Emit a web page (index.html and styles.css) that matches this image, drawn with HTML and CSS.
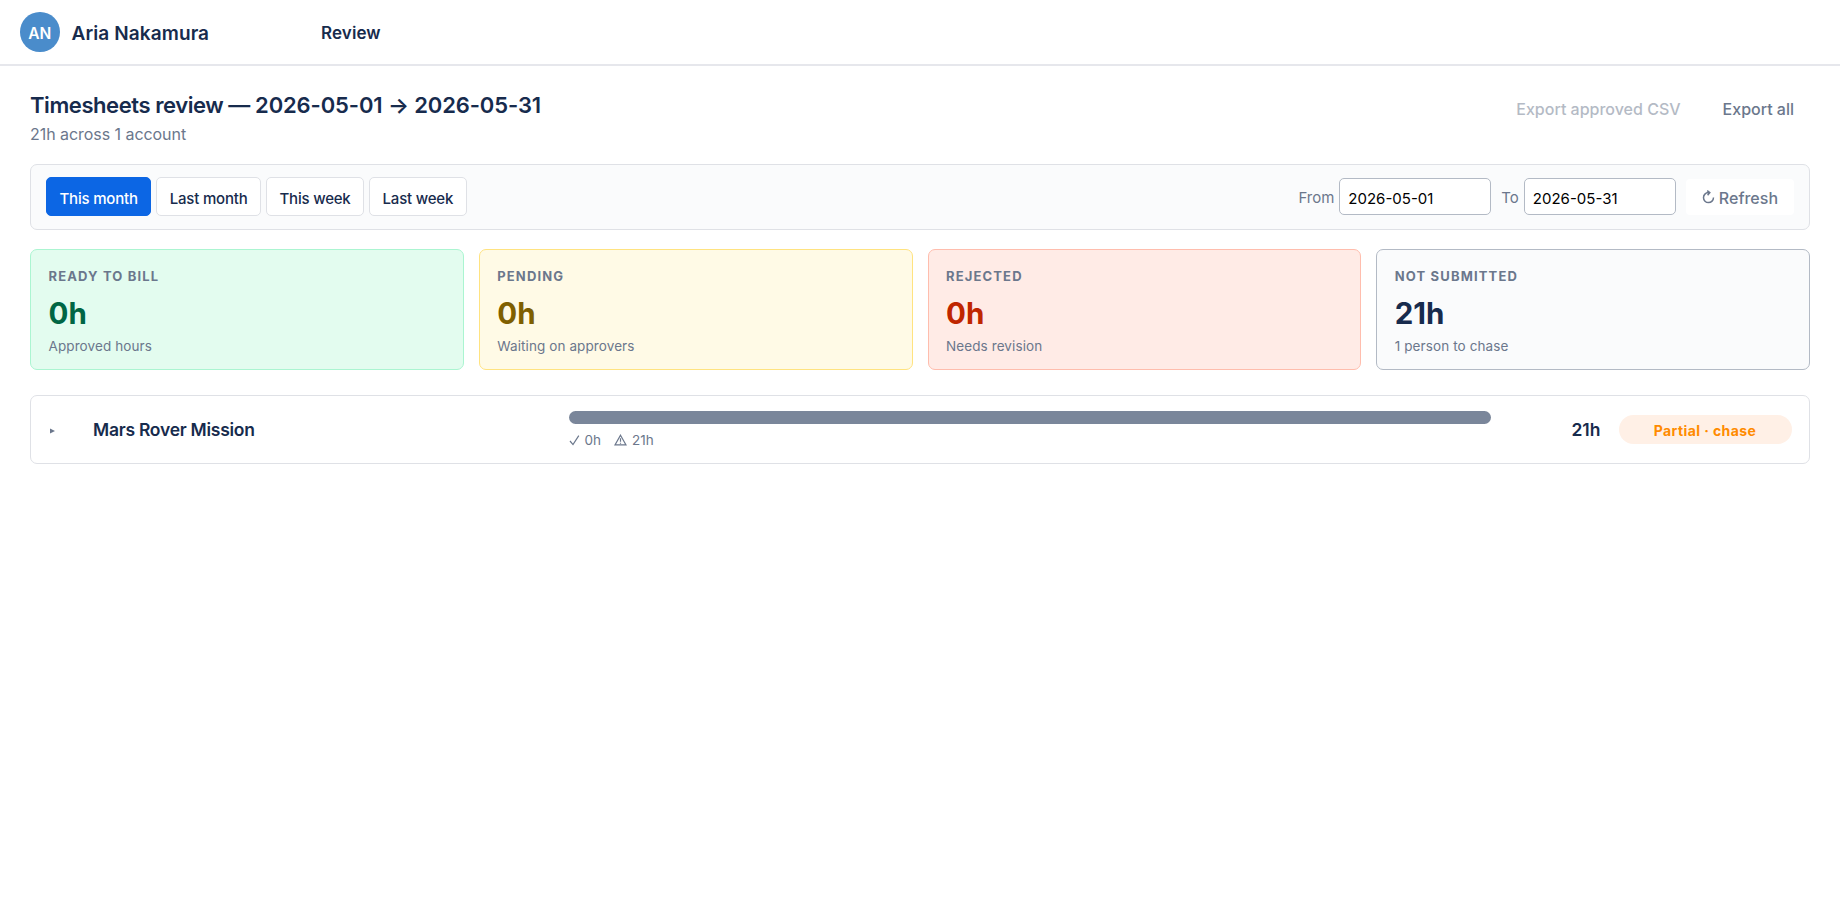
FILE: index.html
```
<!DOCTYPE html>
<html lang="en">
<head>
    <meta charset="UTF-8">
    <meta name="viewport" content="width=device-width, initial-scale=1.0">
    <title>Timesheets review</title>
    <link rel="stylesheet" href="styles.css">
</head>
<body>
    <header class="topbar">
        <div class="avatar">AN</div>
        <div class="user-name">Aria Nakamura</div>
        <nav class="nav">
            <a class="nav-link">Review</a>
        </nav>
    </header>

    <main class="page">
        <div class="page-head">
            <div>
                <h1>Timesheets review — <span class="dates">2026-05-01 → 2026-05-31</span></h1>
                <p class="subtitle">21h across 1 account</p>
            </div>
            <div class="actions">
                <button class="btn" disabled>Export approved CSV</button>
                <button class="btn">Export all</button>
            </div>
        </div>

        <div class="filters">
            <div class="presets">
                <button class="preset active">This month</button>
                <button class="preset">Last month</button>
                <button class="preset">This week</button>
                <button class="preset">Last week</button>
            </div>
            <div class="range">
                <label class="field"><span>From</span> <input type="text" value="2026-05-01"></label>
                <label class="field"><span>To</span> <input type="text" value="2026-05-31"></label>
                <button class="btn refresh">
                    <svg width="13" height="15" viewBox="0 0 13 15"><path d="M7 2.6H6.4a5 5 0 1 0 5.1 5M5.2.6l2.6 2-2.2 2.6"/></svg>
                    <span>Refresh</span>
                </button>
            </div>
        </div>

        <div class="cards">
            <div class="card ready">
                <div class="card-label">Ready to bill</div>
                <div class="card-value">0h</div>
                <div class="card-note">Approved hours</div>
            </div>
            <div class="card pending">
                <div class="card-label">Pending</div>
                <div class="card-value">0h</div>
                <div class="card-note">Waiting on approvers</div>
            </div>
            <div class="card rejected">
                <div class="card-label">Rejected</div>
                <div class="card-value">0h</div>
                <div class="card-note">Needs revision</div>
            </div>
            <div class="card missing">
                <div class="card-label">Not submitted</div>
                <div class="card-value">21h</div>
                <div class="card-note">1 person to chase</div>
            </div>
        </div>

        <div class="account">
            <svg class="caret" width="5" height="6" viewBox="0 0 5 6"><path d="M0 .5L5 3 0 5.5z"/></svg>
            <div class="account-name">Mars Rover Mission</div>
            <div class="progress">
                <div class="bar"><div class="bar-fill" style="width: 100%"></div></div>
                <div class="legend">
                    <span class="legend-item">
                        <svg width="11" height="12" viewBox="0 0 11 12"><path d="M1 7l3 3.6L9.8 1.6"/></svg>0h
                    </span>
                    <span class="legend-item">
                        <svg class="warn" width="13" height="12" viewBox="0 0 13 12"><path d="M6.5 1.2L12 10.9H1zM6.5 4.2v3.6M6.5 8.7v1"/></svg>21h
                    </span>
                </div>
            </div>
            <div class="account-total">21h</div>
            <div class="status">Partial · chase</div>
        </div>
    </main>
</body>
</html>
```
FILE: styles.css
```
* {
    box-sizing: border-box;
}

body {
    margin: 0;
    background: #fff;
    color: #172b4d;
    font-family: Inter, "Liberation Sans", sans-serif;
    font-size: 15px;
}

button, input {
    font: inherit;
}

.topbar {
    display: flex;
    align-items: center;
    height: 66px;
    padding: 0 20px;
    border-bottom: 2px solid #e6e7ec;
}

.avatar {
    width: 39.5px;
    height: 40px;
    border-radius: 50%;
    background: #4a8ccb;
    color: #fff;
    font-size: 15.5px;
    font-weight: 600;
    line-height: 43px;
    text-align: center;
}

.user-name {
    width: 249.5px;
    margin-left: 12px;
    padding-top: 2px;
    font-size: 19px;
    font-weight: 600;
    letter-spacing: 0.1px;
}

.nav-link {
    display: block;
    padding-top: 2px;
    font-size: 17px;
    font-weight: 600;
    letter-spacing: 0.1px;
}

.page {
    padding: 25px 30px;
}

.page-head {
    display: flex;
    justify-content: space-between;
    height: 73px;
}

h1 {
    margin: 0;
    font-size: 22px;
    font-weight: 600;
    letter-spacing: -0.43px;
    line-height: 28px;
}

.dates {
    letter-spacing: -0.12px;
}

.subtitle {
    margin: 4px 0 0;
    color: #6b778c;
    font-size: 16px;
    letter-spacing: -0.05px;
    line-height: 22px;
}

.actions {
    display: flex;
    gap: 10px;
    height: 36px;
}

.btn {
    padding: 0 16px;
    border: 0;
    border-radius: 4px;
    background: #fff;
    color: #6b778c;
    font-size: 16px;
    font-weight: 500;
}

.btn:disabled {
    opacity: 0.5;
}

.filters {
    display: flex;
    justify-content: space-between;
    align-items: center;
    height: 66px;
    padding: 0 15px;
    border: 1px solid #dfe1e6;
    border-radius: 7px;
    background: #fafbfc;
}

.presets {
    display: flex;
    gap: 5px;
    padding-bottom: 1px;
}

.preset {
    height: 39px;
    padding: 3px 12.5px 0;
    border: 1px solid #dfe1e6;
    border-radius: 5px;
    background: #fff;
    color: #172b4d;
    font-size: 15px;
    font-weight: 500;
    letter-spacing: -0.2px;
}

.preset.active {
    border-color: #0c66e4;
    background: #0c66e4;
    color: #fff;
}

.range {
    display: flex;
    align-items: center;
    gap: 10px;
    padding-bottom: 1px;
}

.field {
    display: flex;
    align-items: center;
    gap: 5px;
    color: #6b778c;
}

.field span {
    padding-top: 2px;
}

.field input {
    width: 152px;
    height: 37px;
    padding: 4px 8px 0;
    border: 1px solid #b3bac5;
    border-radius: 5px;
    background: #fff;
    color: #000;
}

.refresh {
    display: flex;
    align-items: center;
    gap: 4px;
    height: 36px;
    padding-top: 2px;
}

.refresh svg {
    fill: none;
    stroke: #6b778c;
    stroke-width: 1.5;
}

.cards {
    display: grid;
    grid-template-columns: repeat(4, 1fr);
    gap: 15px;
    margin-top: 19px;
}

.card {
    height: 121px;
    padding: 18px 17.5px;
    border: 1.5px solid;
    border-radius: 7px;
}

.card-label {
    color: #6b778c;
    font-size: 13px;
    font-weight: 700;
    letter-spacing: 1.15px;
    line-height: 16px;
    text-transform: uppercase;
}

.card-value {
    margin-top: 12px;
    font-size: 29.5px;
    font-weight: 700;
    line-height: 35px;
}

.card-note {
    margin-top: 6px;
    color: #6b778c;
    font-size: 13.5px;
    letter-spacing: 0.1px;
    line-height: 18px;
}

.ready {
    border-color: #abf5d1;
    background: #e3fcef;
}

.ready .card-value {
    color: #006644;
}

.pending {
    border-color: #ffe380;
    background: #fffae6;
}

.pending .card-value {
    color: #7f5f01;
}

.rejected {
    border-color: #ffbdad;
    background: #ffebe6;
}

.rejected .card-value {
    color: #bf2600;
}

.missing {
    border-color: #b3bac5;
    background: #fafbfc;
}

.account {
    display: grid;
    grid-template-columns: 27px 457.5px 922px 92px 173px;
    column-gap: 18px;
    align-items: center;
    height: 69px;
    margin-top: 25px;
    padding: 0 17px;
    border: 1px solid #dfe1e6;
    border-radius: 7px;
}

.caret {
    margin: 3px 0 0 2px;
    fill: #6b778c;
}

.account-name, .account-total {
    font-size: 17.5px;
    font-weight: 600;
    letter-spacing: -0.25px;
}

.account-total {
    text-align: right;
    letter-spacing: 0;
}

.bar {
    height: 13px;
    border-radius: 7px;
    background: #ebecf0;
    overflow: hidden;
}

.bar-fill {
    height: 100%;
    background: #7a869a;
}

.legend {
    display: flex;
    gap: 13px;
    margin-top: 7px;
    color: #6b778c;
    font-size: 13.5px;
    line-height: 18px;
}

.legend-item {
    display: flex;
    align-items: center;
    gap: 5px;
}

.legend svg {
    fill: none;
    stroke: #6b778c;
    stroke-width: 1.2;
}

.status {
    height: 29px;
    border-radius: 15px;
    background: #fff0e6;
    color: #ff8b00;
    font-size: 14px;
    font-weight: 700;
    letter-spacing: 0.4px;
    line-height: 32px;
    text-align: center;
}
```
